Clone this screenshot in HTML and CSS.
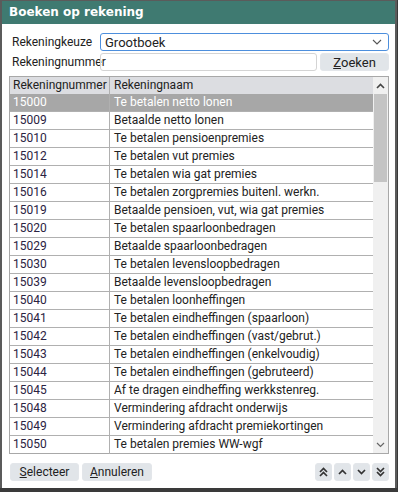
FILE: index.html
```html
<!DOCTYPE html>
<html>
<head>
<meta charset="utf-8">
<link rel="stylesheet" href="styles.css">
</head>
<body>
<div class="window">
  <div class="titlebar">Boeken op rekening</div>
  <div class="content">
    <div class="form-row">
      <span class="label">Rekeningkeuze</span>
      <div class="select">
        <span>Grootboek</span>
        <svg class="chev" width="10" height="6" viewBox="0 0 10 6"><path d="M1 1 L5 5 L9 1" fill="none" stroke="#555" stroke-width="1.1"/></svg>
      </div>
    </div>
    <div class="form-row">
      <span class="label">Rekeningnummer</span>
      <div class="input"></div>
      <button class="btn zoek"><u>Z</u>oeken</button>
    </div>
    <div class="grid">
      <div class="table">
        <div class="row head"><div class="c1">Rekeningnummer</div><div class="c2">Rekeningnaam</div></div>
        <div class="row sel"><div class="c1">15000</div><div class="c2">Te betalen netto lonen</div></div>
        <div class="row"><div class="c1">15009</div><div class="c2">Betaalde netto lonen</div></div>
        <div class="row"><div class="c1">15010</div><div class="c2">Te betalen pensioenpremies</div></div>
        <div class="row"><div class="c1">15012</div><div class="c2">Te betalen vut premies</div></div>
        <div class="row"><div class="c1">15014</div><div class="c2">Te betalen wia gat premies</div></div>
        <div class="row"><div class="c1">15016</div><div class="c2">Te betalen zorgpremies buitenl. werkn.</div></div>
        <div class="row"><div class="c1">15019</div><div class="c2">Betaalde pensioen, vut, wia gat premies</div></div>
        <div class="row"><div class="c1">15020</div><div class="c2">Te betalen spaarloonbedragen</div></div>
        <div class="row"><div class="c1">15029</div><div class="c2">Betaalde spaarloonbedragen</div></div>
        <div class="row"><div class="c1">15030</div><div class="c2">Te betalen levensloopbedragen</div></div>
        <div class="row"><div class="c1">15039</div><div class="c2">Betaalde levensloopbedragen</div></div>
        <div class="row"><div class="c1">15040</div><div class="c2">Te betalen loonheffingen</div></div>
        <div class="row"><div class="c1">15041</div><div class="c2">Te betalen eindheffingen (spaarloon)</div></div>
        <div class="row"><div class="c1">15042</div><div class="c2">Te betalen eindheffingen (vast/gebrut.)</div></div>
        <div class="row"><div class="c1">15043</div><div class="c2">Te betalen eindheffingen (enkelvoudig)</div></div>
        <div class="row"><div class="c1">15044</div><div class="c2">Te betalen eindheffingen (gebruteerd)</div></div>
        <div class="row"><div class="c1">15045</div><div class="c2">Af te dragen eindheffing werkkstenreg.</div></div>
        <div class="row"><div class="c1">15048</div><div class="c2">Vermindering afdracht onderwijs</div></div>
        <div class="row"><div class="c1">15049</div><div class="c2">Vermindering afdracht premiekortingen</div></div>
        <div class="row"><div class="c1">15050</div><div class="c2">Te betalen premies WW-wgf</div></div>
      </div>
      <div class="scrollbar">
        <div class="sb-btn"><svg width="9" height="6" viewBox="0 0 9 6"><path d="M1 5 L4.5 1.5 L8 5" fill="none" stroke="#444" stroke-width="1.6"/></svg></div>
        <div class="sb-track"><div class="sb-thumb"></div></div>
        <div class="sb-btn"><svg width="9" height="6" viewBox="0 0 9 6"><path d="M1 1 L4.5 4.5 L8 1" fill="none" stroke="#666" stroke-width="1.2"/></svg></div>
      </div>
    </div>
    <div class="footer">
      <button class="btn"><u>S</u>electeer</button>
      <button class="btn"><u>A</u>nnuleren</button>
      <div class="spacer"></div>
      <button class="btn nav"><svg width="9" height="10" viewBox="0 0 9 10"><path d="M1 5 L4.5 1.5 L8 5 M1 9 L4.5 5.5 L8 9" fill="none" stroke="#333" stroke-width="1.7"/></svg></button>
      <button class="btn nav"><svg width="9" height="6" viewBox="0 0 9 6"><path d="M1 5 L4.5 1.5 L8 5" fill="none" stroke="#333" stroke-width="1.7"/></svg></button>
      <button class="btn nav"><svg width="9" height="6" viewBox="0 0 9 6"><path d="M1 1 L4.5 4.5 L8 1" fill="none" stroke="#333" stroke-width="1.7"/></svg></button>
      <button class="btn nav"><svg width="9" height="10" viewBox="0 0 9 10"><path d="M1 1 L4.5 4.5 L8 1 M1 5 L4.5 8.5 L8 5" fill="none" stroke="#333" stroke-width="1.7"/></svg></button>
    </div>
  </div>
</div>
</body>
</html>
```
FILE: styles.css
```css
* { box-sizing: border-box; }
html, body { margin: 0; padding: 0; }
body {
  width: 398px;
  height: 492px;
  background: #3a3a3a;
  font-family: Roboto, "Liberation Sans", sans-serif;
  font-size: 12px;
  color: #222;
  overflow: hidden;
}
.window {
  width: 397px;
  height: 488px;
  background: #fff;
  border-left: 2px solid #5b5b5b;
  border-right: 2px solid #5b5b5b;
  border-top: 1px solid #5b5b5b;
  display: flex;
  flex-direction: column;
}
.titlebar {
  height: 23px;
  background: #3f7a71;
  color: #fff;
  font-family: "DejaVu Sans", sans-serif;
  font-weight: bold;
  font-size: 12px;
  padding: 4px 0 0 7px;
  flex: none;
}
.content {
  flex: 1;
  padding: 9px 6px 0 7px;
  display: flex;
  flex-direction: column;
}
.form-row {
  display: flex;
  align-items: center;
  height: 18px;
  margin-bottom: 2px;
}
.label {
  width: 91px;
  padding-left: 3px;
  flex: none;
}
.select {
  flex: 1;
  height: 18px;
  border: 1px solid #4d8fdd;
  border-radius: 3px;
  display: flex;
  align-items: center;
  padding: 0 6px 0 4px;
  font-size: 13px;
}
.select span { flex: 1; }
.input {
  flex: 1;
  height: 18px;
  border: 1px solid #d4d4d4;
  border-radius: 3px;
}
.btn {
  font-family: Roboto, "Liberation Sans", sans-serif;
  font-size: 12px;
  color: #222;
  background: #e1e5e9;
  border: 1px solid #e3e6ea;
  border-radius: 3px;
  height: 18px;
  padding: 0;
  display: flex;
  align-items: center;
  justify-content: center;
}
.zoek {
  width: 69px;
  margin-left: 3px;
  font-size: 13px;
}
.grid {
  margin-top: 3px;
  height: 378px;
  border: 1px solid #a8a8a8;
  display: flex;
}
.table { flex: 1; }
.row {
  display: flex;
  height: 18px;
  border-bottom: 1px solid #b0b0b0;
}
.row:last-child { border-bottom: none; }
.row.head {
  background: #dcdde1;
  height: 17px;
  border-bottom: none;
  color: #222;
}
.row.sel {
  background: #a7a7a7;
  color: #fff;
}
.c1 {
  width: 100px;
  padding-left: 3px;
  border-right: 1px solid #b0b0b0;
  line-height: 17px;
  color: #2b2342;
}
.row.sel .c1 { color: #fff; }
.row.head .c1 { color: #222; }
.c2 {
  flex: 1;
  padding-left: 4px;
  line-height: 17px;
  white-space: nowrap;
  overflow: hidden;
}
.scrollbar {
  width: 15px;
  display: flex;
  flex-direction: column;
  background: #f0f0f0;
}
.sb-btn {
  height: 17px;
  display: flex;
  align-items: center;
  justify-content: center;
  background: #f0f0f0;
}
.sb-track {
  flex: 1;
  background: #f0f0f0;
  padding: 0 1px;
}
.sb-thumb {
  height: 88px;
  background: #c4c4c4;
}
.footer {
  display: flex;
  margin-top: 9px;
  padding-left: 1px;
  gap: 3px;
}
.footer .btn:nth-child(1) { width: 69px; }
.footer .btn:nth-child(2) { width: 70px; }
.spacer { flex: 1; }
.btn.nav {
  width: 17px;
  margin-left: -1px;
}
```
